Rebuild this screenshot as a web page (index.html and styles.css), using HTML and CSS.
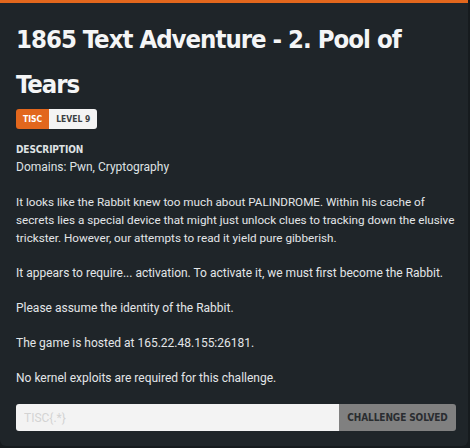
FILE: index.html
```html
<!DOCTYPE html>
<html>
<head>
<meta charset="utf-8">
<link rel="stylesheet" href="styles.css">
</head>
<body>
<div class="card">
  <h1 class="title">1865 Text Adventure - 2. Pool of Tears</h1>
  <div class="badges">
    <span class="badge badge-org">TISC</span><span class="badge badge-level">LEVEL 9</span>
  </div>
  <div class="section-label">DESCRIPTION</div>
  <div class="domains">Domains: Pwn, Cryptography</div>
  <div class="desc">
    <p class="lead">It looks like the Rabbit knew too much about PALINDROME. Within his cache of<br>secrets lies a special device that might just unlock clues to tracking down the elusive<br>trickster. However, our attempts to read it yield pure gibberish.</p>
    <p>It appears to require... activation. To activate it, we must first become the Rabbit.</p>
    <p>Please assume the identity of the Rabbit.</p>
    <p>The game is hosted at 165.22.48.155:26181.</p>
    <p>No kernel exploits are required for this challenge.</p>
  </div>
  <form class="flag-form">
    <input class="flag-input" type="text" placeholder="TISC{.*}">
    <button class="flag-btn" type="button">CHALLENGE SOLVED</button>
  </form>
</div>
</body>
</html>
```
FILE: styles.css
```css
html, body {
  margin: 0;
  padding: 0;
  background: #161b1e;
}
body {
  width: 470px;
  height: 448px;
  overflow: hidden;
}
.card {
  width: 468px;
  height: 446px;
  box-sizing: border-box;
  background: #1f2529;
  border-top: 3px solid #e2671d;
  border-radius: 0 0 6px 6px;
  padding: 14px 4px 0 16px;
  color: #e9ecee;
  font-family: Roboto, "Liberation Sans", sans-serif;
}
.title {
  margin: 0;
  font-family: "DejaVu Sans Condensed", "DejaVu Sans", sans-serif;
  font-weight: bold;
  font-size: 25.5px;
  letter-spacing: -1px;
  line-height: 45px;
  color: #f4f5f6;
}
.badges {
  display: flex;
  margin-top: 2px;
}
.badge {
  font-family: "DejaVu Sans Condensed", "DejaVu Sans", sans-serif;
  font-weight: bold;
  font-size: 8.5px;
  height: 20px;
  line-height: 20px;
  padding: 0 7px;
}
.badge-org {
  background: #e2671d;
  color: #fff;
  border-radius: 3px 0 0 3px;
}
.badge-level {
  background: #f4f4f4;
  color: #3b3f42;
  border-radius: 0 3px 3px 0;
}
.section-label {
  margin-top: 13px;
  font-family: "DejaVu Sans Condensed", "DejaVu Sans", sans-serif;
  font-weight: bold;
  font-size: 10px;
  letter-spacing: -0.1px;
  line-height: 16px;
  color: #dfe2e4;
}
.domains {
  font-size: 12px;
  line-height: 18px;
  color: #dfe2e4;
}
.desc {
  margin-top: 17px;
  font-size: 12px;
  line-height: 18px;
  color: #e3e6e8;
}
.desc p {
  margin: 0 0 17px 0;
}
.desc .lead {
  font-size: 11.7px;
  white-space: nowrap;
}
.flag-form {
  display: flex;
  margin-top: 9px;
  height: 27px;
  width: 440px;
}
.flag-input {
  flex: 1;
  min-width: 0;
  border: none;
  margin: 0;
  background: #f3f3f3;
  border-radius: 3px 0 0 3px;
  padding: 0 8px;
  font-family: Roboto, sans-serif;
  font-size: 12px;
  outline: none;
}
.flag-input::placeholder {
  color: #d3d3d3;
}
.flag-btn {
  width: 117px;
  border: none;
  margin: 0;
  background: #808080;
  color: #2a2d30;
  border-radius: 0 3px 3px 0;
  font-family: "DejaVu Sans Condensed", "DejaVu Sans", sans-serif;
  font-weight: bold;
  font-size: 10px;
  letter-spacing: -0.1px;
  white-space: nowrap;
  padding: 0;
}
```
